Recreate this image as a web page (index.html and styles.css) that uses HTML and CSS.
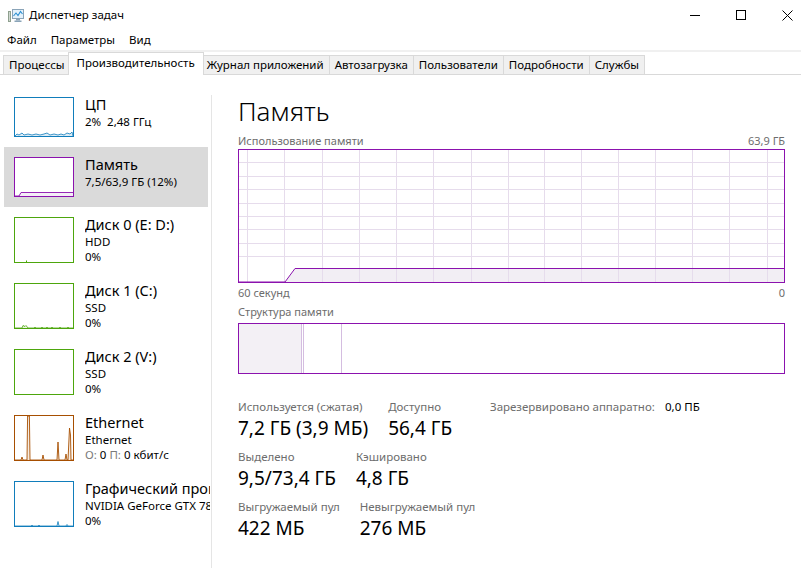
FILE: index.html
```html
<!DOCTYPE html>
<html lang="ru">
<head>
<meta charset="utf-8">
<title>Диспетчер задач</title>
<link rel="stylesheet" href="styles.css">
</head>
<body>
<div class="window">
  <header class="titlebar">
    <svg class="app-icon" viewBox="0 0 16 16" width="16" height="16">
      <rect x="0.5" y="4.5" width="2" height="10" fill="#cfd8d0" stroke="#8fa08f" stroke-width="1"/>
      <rect x="4.5" y="2.5" width="11" height="9" fill="#e3f1fb" stroke="#8aa4b8" stroke-width="1"/>
      <polyline points="5.5,9 8,6 10,8.5 12.5,4.5 14.5,7" fill="none" stroke="#2b8fd1" stroke-width="1.1"/>
      <rect x="8" y="12" width="4" height="1.5" fill="#8aa4b8"/>
      <rect x="6.5" y="13.5" width="7" height="1.5" fill="#8aa4b8"/>
    </svg>
    <span class="title">Диспетчер задач</span>
    <div class="controls">
      <span class="ctl"><svg width="10" height="10" viewBox="0 0 10 10"><line x1="0" y1="5.5" x2="10" y2="5.5" stroke="#000" stroke-width="1"/></svg></span>
      <span class="ctl"><svg width="10" height="10" viewBox="0 0 10 10"><rect x="0.5" y="0.5" width="9" height="9" fill="none" stroke="#000" stroke-width="1"/></svg></span>
      <span class="ctl"><svg width="11" height="11" viewBox="0 0 11 11"><path d="M0.5 0.5 L10.5 10.5 M10.5 0.5 L0.5 10.5" stroke="#000" stroke-width="1" fill="none"/></svg></span>
    </div>
  </header>

  <nav class="menubar">
    <span class="menu-item">Файл</span>
    <span class="menu-item">Параметры</span>
    <span class="menu-item">Вид</span>
  </nav>

  <div class="tabs">
    <span class="tab">Процессы</span>
    <span class="tab active">Производительность</span>
    <span class="tab">Журнал приложений</span>
    <span class="tab">Автозагрузка</span>
    <span class="tab">Пользователи</span>
    <span class="tab">Подробности</span>
    <span class="tab">Службы</span>
  </div>

  <div class="content">
    <aside class="sidebar">
      <div class="items">
        <div class="item short">
          <svg class="thumb" viewBox="0 0 60 40" width="60" height="40">
            <rect x="0.5" y="0.5" width="59" height="39" fill="#fff" stroke="#117dbb"/>
            <polyline points="1,39 3,37 5,38 8,36 10,38 14,37 18,38 22,37 26,38 30,37 33,36 36,38 40,37 44,38 47,37 50,38 53,36 56,37 58,35 59,39" fill="#dcecf6" stroke="#117dbb" stroke-width="0.8"/>
          </svg>
          <div class="info">
            <div class="name">ЦП</div>
            <div class="sub">2%&nbsp; 2,48 ГГц</div>
          </div>
        </div>
        <div class="item short selected">
          <svg class="thumb" viewBox="0 0 60 40" width="60" height="40">
            <rect x="0.5" y="0.5" width="59" height="39" fill="#fff" stroke="#8b12ae"/>
            <polygon points="1,39 5,39 7,35.5 59,35.5 59,39" fill="#f4eef7"/>
            <polyline points="1,39 5,39 7,35.5 59,35.5" fill="none" stroke="#8b12ae" stroke-width="0.9"/>
          </svg>
          <div class="info">
            <div class="name">Память</div>
            <div class="sub">7,5/63,9 ГБ (12%)</div>
          </div>
        </div>
        <div class="item">
          <svg class="thumb" viewBox="0 0 60 46" width="60" height="46">
            <rect x="0.5" y="0.5" width="59" height="45" fill="#fff" stroke="#4da60c"/>
            <rect x="12" y="43.5" width="1" height="1.5" fill="#4da60c"/>
          </svg>
          <div class="info">
            <div class="name">Диск 0 (E: D:)</div>
            <div class="sub">HDD</div>
            <div class="sub">0%</div>
          </div>
        </div>
        <div class="item">
          <svg class="thumb" viewBox="0 0 60 46" width="60" height="46">
            <rect x="0.5" y="0.5" width="59" height="45" fill="#fff" stroke="#4da60c"/>
            <polyline points="1,45 8,45 9,42.5 11,43.5 12,42.5 14,45 20,45 21,44 22,45 27,45 28,44 29,45 32,45 33,44 34,45 37,45 38,44 39,45 45,45 46,44 47,45 53,45 54,44 55,45 59,45" fill="#eaf5e1" stroke="#4da60c" stroke-width="0.8"/>
          </svg>
          <div class="info">
            <div class="name">Диск 1 (C:)</div>
            <div class="sub">SSD</div>
            <div class="sub">0%</div>
          </div>
        </div>
        <div class="item">
          <svg class="thumb" viewBox="0 0 60 46" width="60" height="46">
            <rect x="0.5" y="0.5" width="59" height="45" fill="#fff" stroke="#4da60c"/>
          </svg>
          <div class="info">
            <div class="name">Диск 2 (V:)</div>
            <div class="sub">SSD</div>
            <div class="sub">0%</div>
          </div>
        </div>
        <div class="item">
          <svg class="thumb" viewBox="0 0 60 46" width="60" height="46">
            <rect x="0.5" y="0.5" width="59" height="45" fill="#fff" stroke="#a74f01"/>
            <polyline points="1,45 7,45 8,42 9,45 13,45 13.6,1 15.4,1 16,45 28,45 29,40 30,45 43,45 44,27 45,45 51,45 52,39 53,45 54,45 55.5,13 56.5,20 57,45 59,45" fill="#f6ebe0" stroke="#a74f01" stroke-width="0.9"/>
          </svg>
          <div class="info">
            <div class="name">Ethernet</div>
            <div class="sub">Ethernet</div>
            <div class="sub"><span class="dim">О:</span> 0 <span class="dim">П:</span> 0 кбит/с</div>
          </div>
        </div>
        <div class="item">
          <svg class="thumb" viewBox="0 0 60 46" width="60" height="46">
            <rect x="0.5" y="0.5" width="59" height="45" fill="#fff" stroke="#117dbb"/>
            <polyline points="1,45 17,45 18,44 19,45 24,45 25,44 26,45 43,45 44,40.5 45,45 52,45 53,43.5 54,45 59,45" fill="#dcecf6" stroke="#117dbb" stroke-width="0.8"/>
          </svg>
          <div class="info">
            <div class="name">Графический процессор 0</div>
            <div class="sub">NVIDIA GeForce GTX 780</div>
            <div class="sub">0%</div>
          </div>
        </div>
      </div>
    </aside>

    <main class="panel">
      <h1 class="heading">Память</h1>
      <div class="caption top"><span>Использование памяти</span><span>63,9 ГБ</span></div>
      <svg class="graph" viewBox="0 0 547 134" width="547" height="134" shape-rendering="crispEdges">
        <rect x="0" y="0" width="547" height="134" fill="#fff"/>
        <polygon points="1,133 47,133 57,119 546,119 546,133" fill="#f2eef4" shape-rendering="auto"/>
        <g stroke="#e6dcec" stroke-width="1">
          <line x1="9.5" y1="1" x2="9.5" y2="133"/>
          <line x1="46.5" y1="1" x2="46.5" y2="133"/>
          <line x1="84.5" y1="1" x2="84.5" y2="133"/>
          <line x1="121.5" y1="1" x2="121.5" y2="133"/>
          <line x1="158.5" y1="1" x2="158.5" y2="133"/>
          <line x1="195.5" y1="1" x2="195.5" y2="133"/>
          <line x1="233.5" y1="1" x2="233.5" y2="133"/>
          <line x1="270.5" y1="1" x2="270.5" y2="133"/>
          <line x1="306.5" y1="1" x2="306.5" y2="133"/>
          <line x1="343.5" y1="1" x2="343.5" y2="133"/>
          <line x1="380.5" y1="1" x2="380.5" y2="133"/>
          <line x1="417.5" y1="1" x2="417.5" y2="133"/>
          <line x1="454.5" y1="1" x2="454.5" y2="133"/>
          <line x1="491.5" y1="1" x2="491.5" y2="133"/>
          <line x1="529.5" y1="1" x2="529.5" y2="133"/>
          <line x1="1" y1="13.5" x2="546" y2="13.5"/>
          <line x1="1" y1="27.5" x2="546" y2="27.5"/>
          <line x1="1" y1="40.5" x2="546" y2="40.5"/>
          <line x1="1" y1="54.5" x2="546" y2="54.5"/>
          <line x1="1" y1="67.5" x2="546" y2="67.5"/>
          <line x1="1" y1="80.5" x2="546" y2="80.5"/>
          <line x1="1" y1="94.5" x2="546" y2="94.5"/>
          <line x1="1" y1="107.5" x2="546" y2="107.5"/>
        </g>
        <polyline points="1,133 47,133 57,119.5 546,119.5" fill="none" stroke="#8b12ae" stroke-width="1" shape-rendering="auto"/>
        <rect x="0.5" y="0.5" width="546" height="133" fill="none" stroke="#8b12ae" stroke-width="1.2"/>
      </svg>
      <div class="caption foot"><span>60 секунд</span><span>0</span></div>
      <div class="caption struct-label">Структура памяти</div>
      <svg class="struct" viewBox="0 0 547 51" width="547" height="51" shape-rendering="crispEdges">
        <rect x="0" y="0" width="547" height="51" fill="#fff"/>
        <rect x="1" y="1" width="63" height="49" fill="#f3f0f5"/>
        <line x1="63.5" y1="1" x2="63.5" y2="50" stroke="#d4bde0"/>
        <line x1="65.5" y1="1" x2="65.5" y2="50" stroke="#d4bde0"/>
        <line x1="103.5" y1="1" x2="103.5" y2="50" stroke="#d4bde0"/>
        <rect x="0.5" y="0.5" width="546" height="50" fill="none" stroke="#8b12ae" stroke-width="1.2"/>
      </svg>

      <section class="stats">
        <div class="stats-left">
          <div class="row">
            <div class="stat"><div class="lbl">Используется (сжатая)</div><div class="val">7,2 ГБ (3,9 МБ)</div></div>
            <div class="stat"><div class="lbl">Доступно</div><div class="val">56,4 ГБ</div></div>
          </div>
          <div class="row">
            <div class="stat"><div class="lbl">Выделено</div><div class="val">9,5/73,4 ГБ</div></div>
            <div class="stat"><div class="lbl">Кэшировано</div><div class="val">4,8 ГБ</div></div>
          </div>
          <div class="row">
            <div class="stat"><div class="lbl">Выгружаемый пул</div><div class="val">422 МБ</div></div>
            <div class="stat"><div class="lbl">Невыгружаемый пул</div><div class="val">276 МБ</div></div>
          </div>
        </div>
        <div class="reserved">
          <span class="lbl">Зарезервировано аппаратно:</span>
          <span class="rval">0,0 ПБ</span>
        </div>
      </section>
    </main>
  </div>
</div>
</body>
</html>
```
FILE: styles.css
```css
* {
  box-sizing: border-box;
  margin: 0;
  padding: 0;
}

html, body {
  width: 801px;
  height: 568px;
  overflow: hidden;
  background: #fff;
}

body {
  font-family: "Noto Sans", "Open Sans", sans-serif;
  font-size: 11.5px;
  color: #000;
}

.window {
  width: 801px;
  height: 568px;
  overflow: hidden;
}

/* Title bar */
.titlebar {
  height: 30px;
  display: flex;
  align-items: center;
  padding-left: 8px;
}

.app-icon {
  display: block;
  margin-right: 5px;
  margin-top: -1px;
}

.title {
  font-size: 11.5px;
  line-height: 16px;
}

.controls {
  margin-left: auto;
  margin-right: -9px;
  display: flex;
}

.ctl {
  width: 46px;
  height: 30px;
  display: flex;
  align-items: center;
  justify-content: center;
}

.ctl svg {
  display: block;
}

/* Menu */
.menubar {
  height: 20px;
  display: flex;
  align-items: center;
}

.menu-item {
  padding: 0 7px;
  line-height: 16px;
}

/* Tabs */
.tabs {
  height: 25px;
  display: flex;
  align-items: flex-end;
  padding-left: 4px;
  border-top: 2px solid #f0f0f0;
  border-bottom: 1px solid #d9d9d9;
}

.tab {
  height: 19px;
  line-height: 17px;
  padding: 0 5px;
  background: #f0f0f0;
  border: 1px solid #d9d9d9;
  border-bottom: none;
  margin-left: -1px;
  white-space: nowrap;
}

.tab.active {
  height: 23px;
  line-height: 20px;
  margin: 0 -2px -1px -3px;
  padding: 0 8px;
  background: #fff;
  position: relative;
  z-index: 1;
}

/* Content */
.content {
  display: flex;
  height: 493px;
}

.sidebar {
  width: 212px;
  flex: 0 0 212px;
  margin-top: 20px;
  border-right: 1px solid #e5e5e5;
}

.items {
  margin-top: -8px;
}

.item {
  display: flex;
  align-items: flex-start;
  gap: 11px;
  width: 204px;
  height: 66px;
  margin-left: 4px;
  padding: 10px 0 0 10px;
}

.item.short {
  height: 60px;
}

.item.selected {
  background: #dadada;
}

.thumb {
  display: block;
  flex: 0 0 60px;
}

.info {
  width: 125px;
  overflow: hidden;
  white-space: nowrap;
  margin: -3px -6px 0 0;
}

.name {
  font-size: 14.5px;
  line-height: 20px;
}

.sub {
  font-size: 11.5px;
  line-height: 15px;
}

.dim {
  color: #7a7a7a;
}

/* Main panel */
.panel {
  flex: 1;
  padding: 20px 16px 0 26px;
  min-width: 0;
}

.heading {
  font-size: 26px;
  font-weight: 300;
  line-height: 32px;
}

.caption {
  display: flex;
  justify-content: space-between;
  font-size: 11px;
  line-height: 14px;
  color: #6d6d6d;
}

.caption.top {
  margin-top: 7px;
  margin-bottom: 1px;
}

.caption.foot {
  margin-top: 3px;
}

.caption.struct-label {
  margin-top: 5px;
  margin-bottom: 4px;
}

.graph,
.struct {
  display: block;
}

/* Stats */
.stats {
  display: flex;
  margin-top: 25px;
}

.stats-left {
  flex: 0 0 252px;
  display: flex;
  flex-direction: column;
  gap: 8px;
}

.row {
  display: flex;
  gap: 20px;
  white-space: nowrap;
}

.lbl {
  font-size: 11.5px;
  line-height: 16px;
  color: #6d6d6d;
}

.val {
  font-size: 19px;
  line-height: 26px;
  color: #000;
}

.reserved {
  display: grid;
  grid-template-columns: 175px auto;
  align-self: flex-start;
  white-space: nowrap;
}

.rval {
  font-size: 11.5px;
  line-height: 16px;
  color: #000;
}
```
